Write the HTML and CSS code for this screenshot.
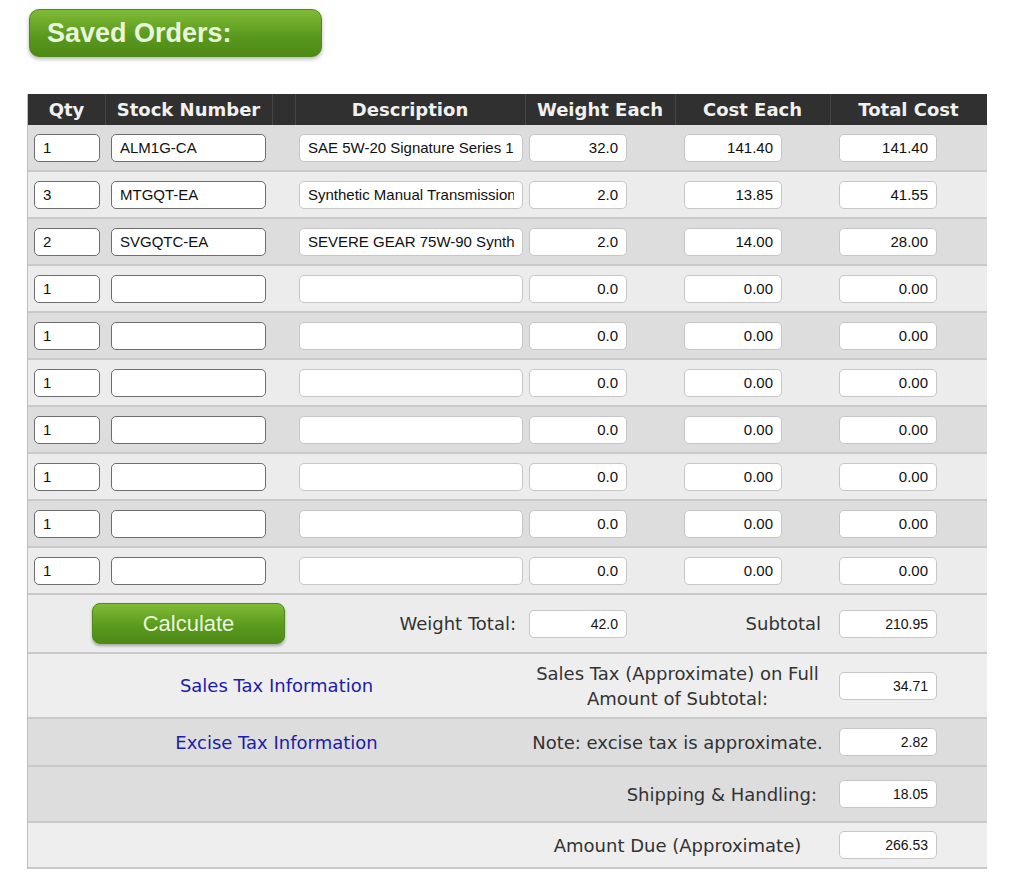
FILE: index.html
```html
<!DOCTYPE html>
<html lang="en">
<head>
    <meta charset="UTF-8">
    <title>Saved Orders</title>
    <link rel="stylesheet" href="styles.css">
</head>
<body>
    <div class="page">
        <div class="saved-title">Saved Orders:</div>

        <div class="table-wrap">
        <table class="orders">
            <colgroup>
                <col class="c-qty">
                <col class="c-stock">
                <col class="c-gap">
                <col class="c-desc">
                <col class="c-weight">
                <col class="c-cost">
                <col class="c-total">
            </colgroup>
            <thead>
                <tr>
                    <th>Qty</th>
                    <th>Stock Number</th>
                    <th></th>
                    <th>Description</th>
                    <th>Weight Each</th>
                    <th>Cost Each</th>
                    <th>Total Cost</th>
                </tr>
            </thead>
            <tbody>
                <tr>
                    <td class="p-qty"><input class="in dark qty" value="1"></td>
                    <td class="p-stock"><input class="in dark stock" value="ALM1G-CA"></td>
                    <td></td>
                    <td class="p-desc"><input class="in desc" value="SAE 5W-20 Signature Series 1"></td>
                    <td class="p-weight"><input class="in num" value="32.0"></td>
                    <td class="p-cost"><input class="in num" value="141.40"></td>
                    <td class="p-cost"><input class="in num" value="141.40"></td>
                </tr>
                <tr>
                    <td class="p-qty"><input class="in dark qty" value="3"></td>
                    <td class="p-stock"><input class="in dark stock" value="MTGQT-EA"></td>
                    <td></td>
                    <td class="p-desc"><input class="in desc" value="Synthetic Manual Transmission"></td>
                    <td class="p-weight"><input class="in num" value="2.0"></td>
                    <td class="p-cost"><input class="in num" value="13.85"></td>
                    <td class="p-cost"><input class="in num" value="41.55"></td>
                </tr>
                <tr>
                    <td class="p-qty"><input class="in dark qty" value="2"></td>
                    <td class="p-stock"><input class="in dark stock" value="SVGQTC-EA"></td>
                    <td></td>
                    <td class="p-desc"><input class="in desc" value="SEVERE GEAR 75W-90 Synthetic"></td>
                    <td class="p-weight"><input class="in num" value="2.0"></td>
                    <td class="p-cost"><input class="in num" value="14.00"></td>
                    <td class="p-cost"><input class="in num" value="28.00"></td>
                </tr>
                <tr>
                    <td class="p-qty"><input class="in dark qty" value="1"></td>
                    <td class="p-stock"><input class="in dark stock" value=""></td>
                    <td></td>
                    <td class="p-desc"><input class="in desc" value=""></td>
                    <td class="p-weight"><input class="in num" value="0.0"></td>
                    <td class="p-cost"><input class="in num" value="0.00"></td>
                    <td class="p-cost"><input class="in num" value="0.00"></td>
                </tr>
                <tr>
                    <td class="p-qty"><input class="in dark qty" value="1"></td>
                    <td class="p-stock"><input class="in dark stock" value=""></td>
                    <td></td>
                    <td class="p-desc"><input class="in desc" value=""></td>
                    <td class="p-weight"><input class="in num" value="0.0"></td>
                    <td class="p-cost"><input class="in num" value="0.00"></td>
                    <td class="p-cost"><input class="in num" value="0.00"></td>
                </tr>
                <tr>
                    <td class="p-qty"><input class="in dark qty" value="1"></td>
                    <td class="p-stock"><input class="in dark stock" value=""></td>
                    <td></td>
                    <td class="p-desc"><input class="in desc" value=""></td>
                    <td class="p-weight"><input class="in num" value="0.0"></td>
                    <td class="p-cost"><input class="in num" value="0.00"></td>
                    <td class="p-cost"><input class="in num" value="0.00"></td>
                </tr>
                <tr>
                    <td class="p-qty"><input class="in dark qty" value="1"></td>
                    <td class="p-stock"><input class="in dark stock" value=""></td>
                    <td></td>
                    <td class="p-desc"><input class="in desc" value=""></td>
                    <td class="p-weight"><input class="in num" value="0.0"></td>
                    <td class="p-cost"><input class="in num" value="0.00"></td>
                    <td class="p-cost"><input class="in num" value="0.00"></td>
                </tr>
                <tr>
                    <td class="p-qty"><input class="in dark qty" value="1"></td>
                    <td class="p-stock"><input class="in dark stock" value=""></td>
                    <td></td>
                    <td class="p-desc"><input class="in desc" value=""></td>
                    <td class="p-weight"><input class="in num" value="0.0"></td>
                    <td class="p-cost"><input class="in num" value="0.00"></td>
                    <td class="p-cost"><input class="in num" value="0.00"></td>
                </tr>
                <tr>
                    <td class="p-qty"><input class="in dark qty" value="1"></td>
                    <td class="p-stock"><input class="in dark stock" value=""></td>
                    <td></td>
                    <td class="p-desc"><input class="in desc" value=""></td>
                    <td class="p-weight"><input class="in num" value="0.0"></td>
                    <td class="p-cost"><input class="in num" value="0.00"></td>
                    <td class="p-cost"><input class="in num" value="0.00"></td>
                </tr>
                <tr>
                    <td class="p-qty"><input class="in dark qty" value="1"></td>
                    <td class="p-stock"><input class="in dark stock" value=""></td>
                    <td></td>
                    <td class="p-desc"><input class="in desc" value=""></td>
                    <td class="p-weight"><input class="in num" value="0.0"></td>
                    <td class="p-cost"><input class="in num" value="0.00"></td>
                    <td class="p-cost"><input class="in num" value="0.00"></td>
                </tr>
            </tbody>
            <tfoot>
                <tr class="f-calc">
                    <td colspan="3" class="calc-cell"><button class="calc-btn">Calculate</button></td>
                    <td class="label right">Weight Total:</td>
                    <td class="p-weight"><input class="in num small" value="42.0"></td>
                    <td class="label right">Subtotal</td>
                    <td class="p-cost"><input class="in num small" value="210.95"></td>
                </tr>
                <tr class="f-sales">
                    <td colspan="4" class="link-cell"><a href="#">Sales Tax Information</a></td>
                    <td colspan="2" class="label center">Sales Tax (Approximate) on Full<br>Amount of Subtotal:</td>
                    <td class="p-cost"><input class="in num small" value="34.71"></td>
                </tr>
                <tr class="f-excise">
                    <td colspan="4" class="link-cell"><a href="#">Excise Tax Information</a></td>
                    <td colspan="2" class="label center">Note: excise tax is approximate.</td>
                    <td class="p-cost"><input class="in num small" value="2.82"></td>
                </tr>
                <tr class="f-ship">
                    <td colspan="4"></td>
                    <td colspan="2" class="label right">Shipping &amp; Handling:</td>
                    <td class="p-cost"><input class="in num small" value="18.05"></td>
                </tr>
                <tr class="f-due">
                    <td colspan="4"></td>
                    <td colspan="2" class="label center">Amount Due (Approximate)</td>
                    <td class="p-cost"><input class="in num small" value="266.53"></td>
                </tr>
            </tfoot>
        </table>
        </div>
    </div>
</body>
</html>
```

FILE: styles.css
```css
body {
    margin: 0;
    background-color: #fff;
    font-family: "DejaVu Sans", Verdana, sans-serif;
    color: #333;
}

.page {
    padding: 9px 0 0 27px;
}

/* green title bar */
.saved-title {
    margin-left: 2px;
    width: 293px;
    height: 48px;
    box-sizing: border-box;
    padding-left: 17px;
    line-height: 47px;
    border: 1px solid #4c8a19;
    border-radius: 10px;
    background: linear-gradient(#80bb35, #5a9a1f 55%, #4e8a16);
    box-shadow: 0 2px 4px rgba(0, 0, 0, 0.3);
    color: #e9f6dc;
    font-family: "Liberation Sans", Arial, sans-serif;
    font-weight: bold;
    font-size: 27px;
}

.table-wrap {
    margin-top: 37px;
    width: 960px;
    box-sizing: border-box;
    border-left: 1px solid #bdbdbd;
}

.orders {
    width: 100%;
    table-layout: fixed;
    border-collapse: collapse;
    border-spacing: 0;
}

.c-qty { width: 77px; }
.c-stock { width: 167px; }
.c-gap { width: 23px; }
.c-desc { width: 230px; }
.c-weight { width: 150px; }
.c-cost { width: 155px; }
.c-total { width: 157px; }

.orders th {
    height: 30px;
    padding: 0 0 1px;
    background-color: #303030;
    color: #f1f1f1;
    font-weight: bold;
    font-size: 18px;
    text-align: center;
    box-shadow: inset 1px 0 0 #464646;
}

.orders th:first-child {
    box-shadow: none;
}

.orders td {
    height: 45px;
    padding: 0;
    vertical-align: middle;
}

.orders tbody tr,
.orders tfoot tr {
    border-bottom: 2px solid #c9c9c9;
}

.orders tbody tr:nth-child(odd) { background-color: #dddddd; }
.orders tbody tr:nth-child(even) { background-color: #ececec; }

/* cell paddings so inputs sit where they should */
.orders .p-qty { padding-left: 6px; }
.orders .p-stock { padding-left: 6px; }
.orders .p-desc { padding-left: 4px; }
.orders .p-weight { padding-left: 4px; }
.orders .p-cost { padding-left: 9px; }

.in {
    display: block;
    height: 28px;
    box-sizing: border-box;
    margin: 0;
    padding: 0 8px;
    border: 1px solid #c6c6c6;
    border-radius: 5px;
    background-color: #fff;
    color: #111;
    font-family: "Liberation Sans", Arial, sans-serif;
    font-size: 15px;
    outline: none;
}

.in.dark {
    border: 1.5px solid #6e6e6e;
}

.qty { width: 66px; }
.stock { width: 155px; }
.desc { width: 224px; }

.num {
    width: 98px;
    text-align: right;
}

.small {
    font-size: 14px;
    padding-right: 8px;
}

/* footer rows */
.f-calc { background-color: #ececec; }
.orders .f-calc td { height: 57px; }
.f-sales { background-color: #eeeeee; }
.orders .f-sales td { height: 63px; }
.f-excise { background-color: #dddddd; }
.orders .f-excise td { height: 46px; }
.f-ship { background-color: #dddddd; }
.orders .f-ship td { height: 54px; }
.f-due { background-color: #eeeeee; }
.orders .f-due td { height: 44px; }

.orders .calc-cell {
    padding-left: 64px;
}

.calc-btn {
    display: block;
    width: 193px;
    height: 41px;
    border: 1px solid #4c8a19;
    border-radius: 8px;
    background: linear-gradient(#80bb35, #5a9a1f 55%, #4e8a16);
    box-shadow: 0 2px 3px rgba(0, 0, 0, 0.3);
    color: #e9f6dc;
    font-family: "Liberation Sans", Arial, sans-serif;
    font-size: 22px;
    cursor: pointer;
}

.label {
    font-size: 18px;
    color: #333;
    line-height: 25px;
}

.orders .label.right {
    text-align: right;
    padding-right: 9px;
}

.orders .f-ship .label.right {
    padding-right: 13px;
}

.label.center {
    text-align: center;
}

.link-cell {
    text-align: center;
    font-size: 18px;
}

.link-cell a {
    color: #1c1caa;
    text-decoration: none;
}
```
